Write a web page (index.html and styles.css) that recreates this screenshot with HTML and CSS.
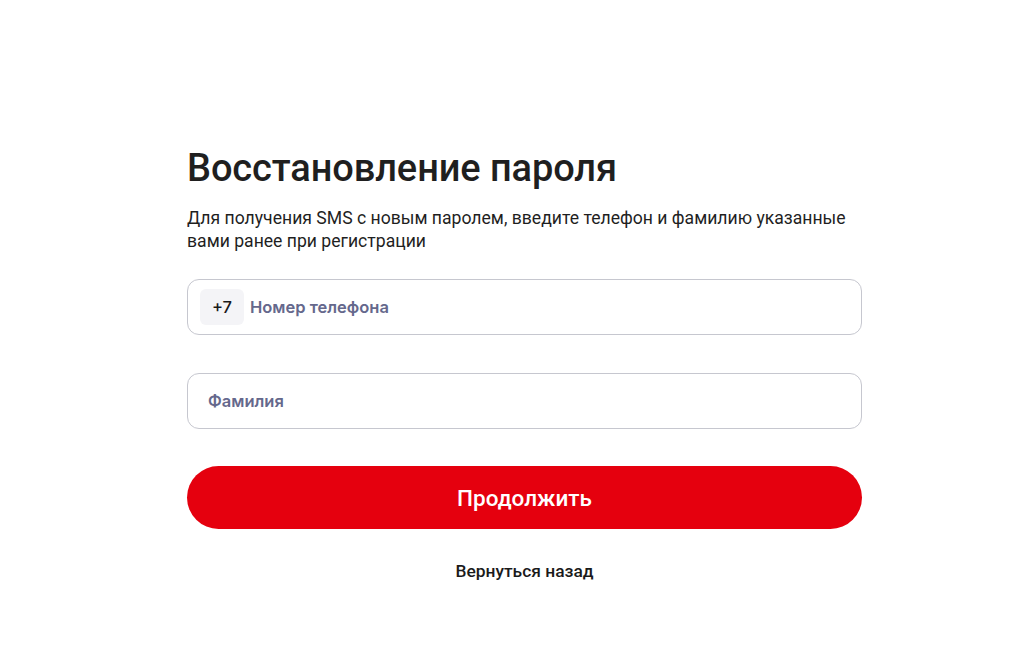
FILE: index.html
```html
<!DOCTYPE html>
<html lang="ru">
<head>
<meta charset="utf-8">
<title>Восстановление пароля</title>
<link rel="stylesheet" href="styles.css">
</head>
<body>
<main class="page">
  <section class="form">
    <h1 class="title">Восстановление пароля</h1>
    <p class="lead">Для получения SMS с новым паролем, введите телефон и фамилию указанные вами ранее при регистрации</p>
    <label class="field field-phone">
      <span class="prefix">+7</span>
      <input class="input" type="text" placeholder="Номер телефона">
    </label>
    <label class="field">
      <input class="input" type="text" placeholder="Фамилия">
    </label>
    <button class="submit" type="button">Продолжить</button>
    <a class="back" href="#">Вернуться назад</a>
  </section>
</main>
</body>
</html>
```
FILE: styles.css
```css
* { box-sizing: border-box; }
html, body { margin: 0; padding: 0; background: #fff; }
body { font-family: Roboto, "Liberation Sans", sans-serif; color: #1f1f1f; }
.page { display: flex; justify-content: center; padding-top: 141px; }
.form { width: 675px; display: flex; flex-direction: column; margin-left: 17px; }
.title { margin: 0; font-size: 38px; line-height: 54px; font-weight: 500; color: #1f1f1f; letter-spacing: -0.1px; }
.lead { margin: 12px 0 0; font-size: 17.6px; line-height: 23px; color: #1f1f1f; }
.field { display: flex; align-items: center; height: 56px; border: 1px solid #c6c7cf; border-radius: 12px; padding: 0 20px; margin-top: 38px; background: #fff; }
.field-phone { padding-left: 12px; margin-top: 26px; }
.field + .field { margin-top: 38px; }
.prefix { display: flex; align-items: center; justify-content: center; width: 44px; height: 36px; border-radius: 6px; background: #f4f4f7; font-family: Inter, "Noto Sans", sans-serif; font-size: 16.5px; font-weight: 500; color: #1a1a1a; margin-right: 6px; }
.input { flex: 1; border: 0; outline: none; background: transparent; font-family: Inter, "Noto Sans", sans-serif; font-size: 16.5px; font-weight: 600; color: #1a1a1a; padding: 0; }
.input::placeholder { color: #65688c; }
.submit { margin-top: 37px; height: 63px; border: 0; border-radius: 32px; background: #e5000e; color: #fff; font-family: Roboto, "Liberation Sans", sans-serif; font-size: 22.5px; font-weight: 500; cursor: pointer; }
.back { align-self: center; margin-top: 32px; font-size: 17.4px; font-weight: 500; color: #1a1a1a; text-decoration: none; }
```
